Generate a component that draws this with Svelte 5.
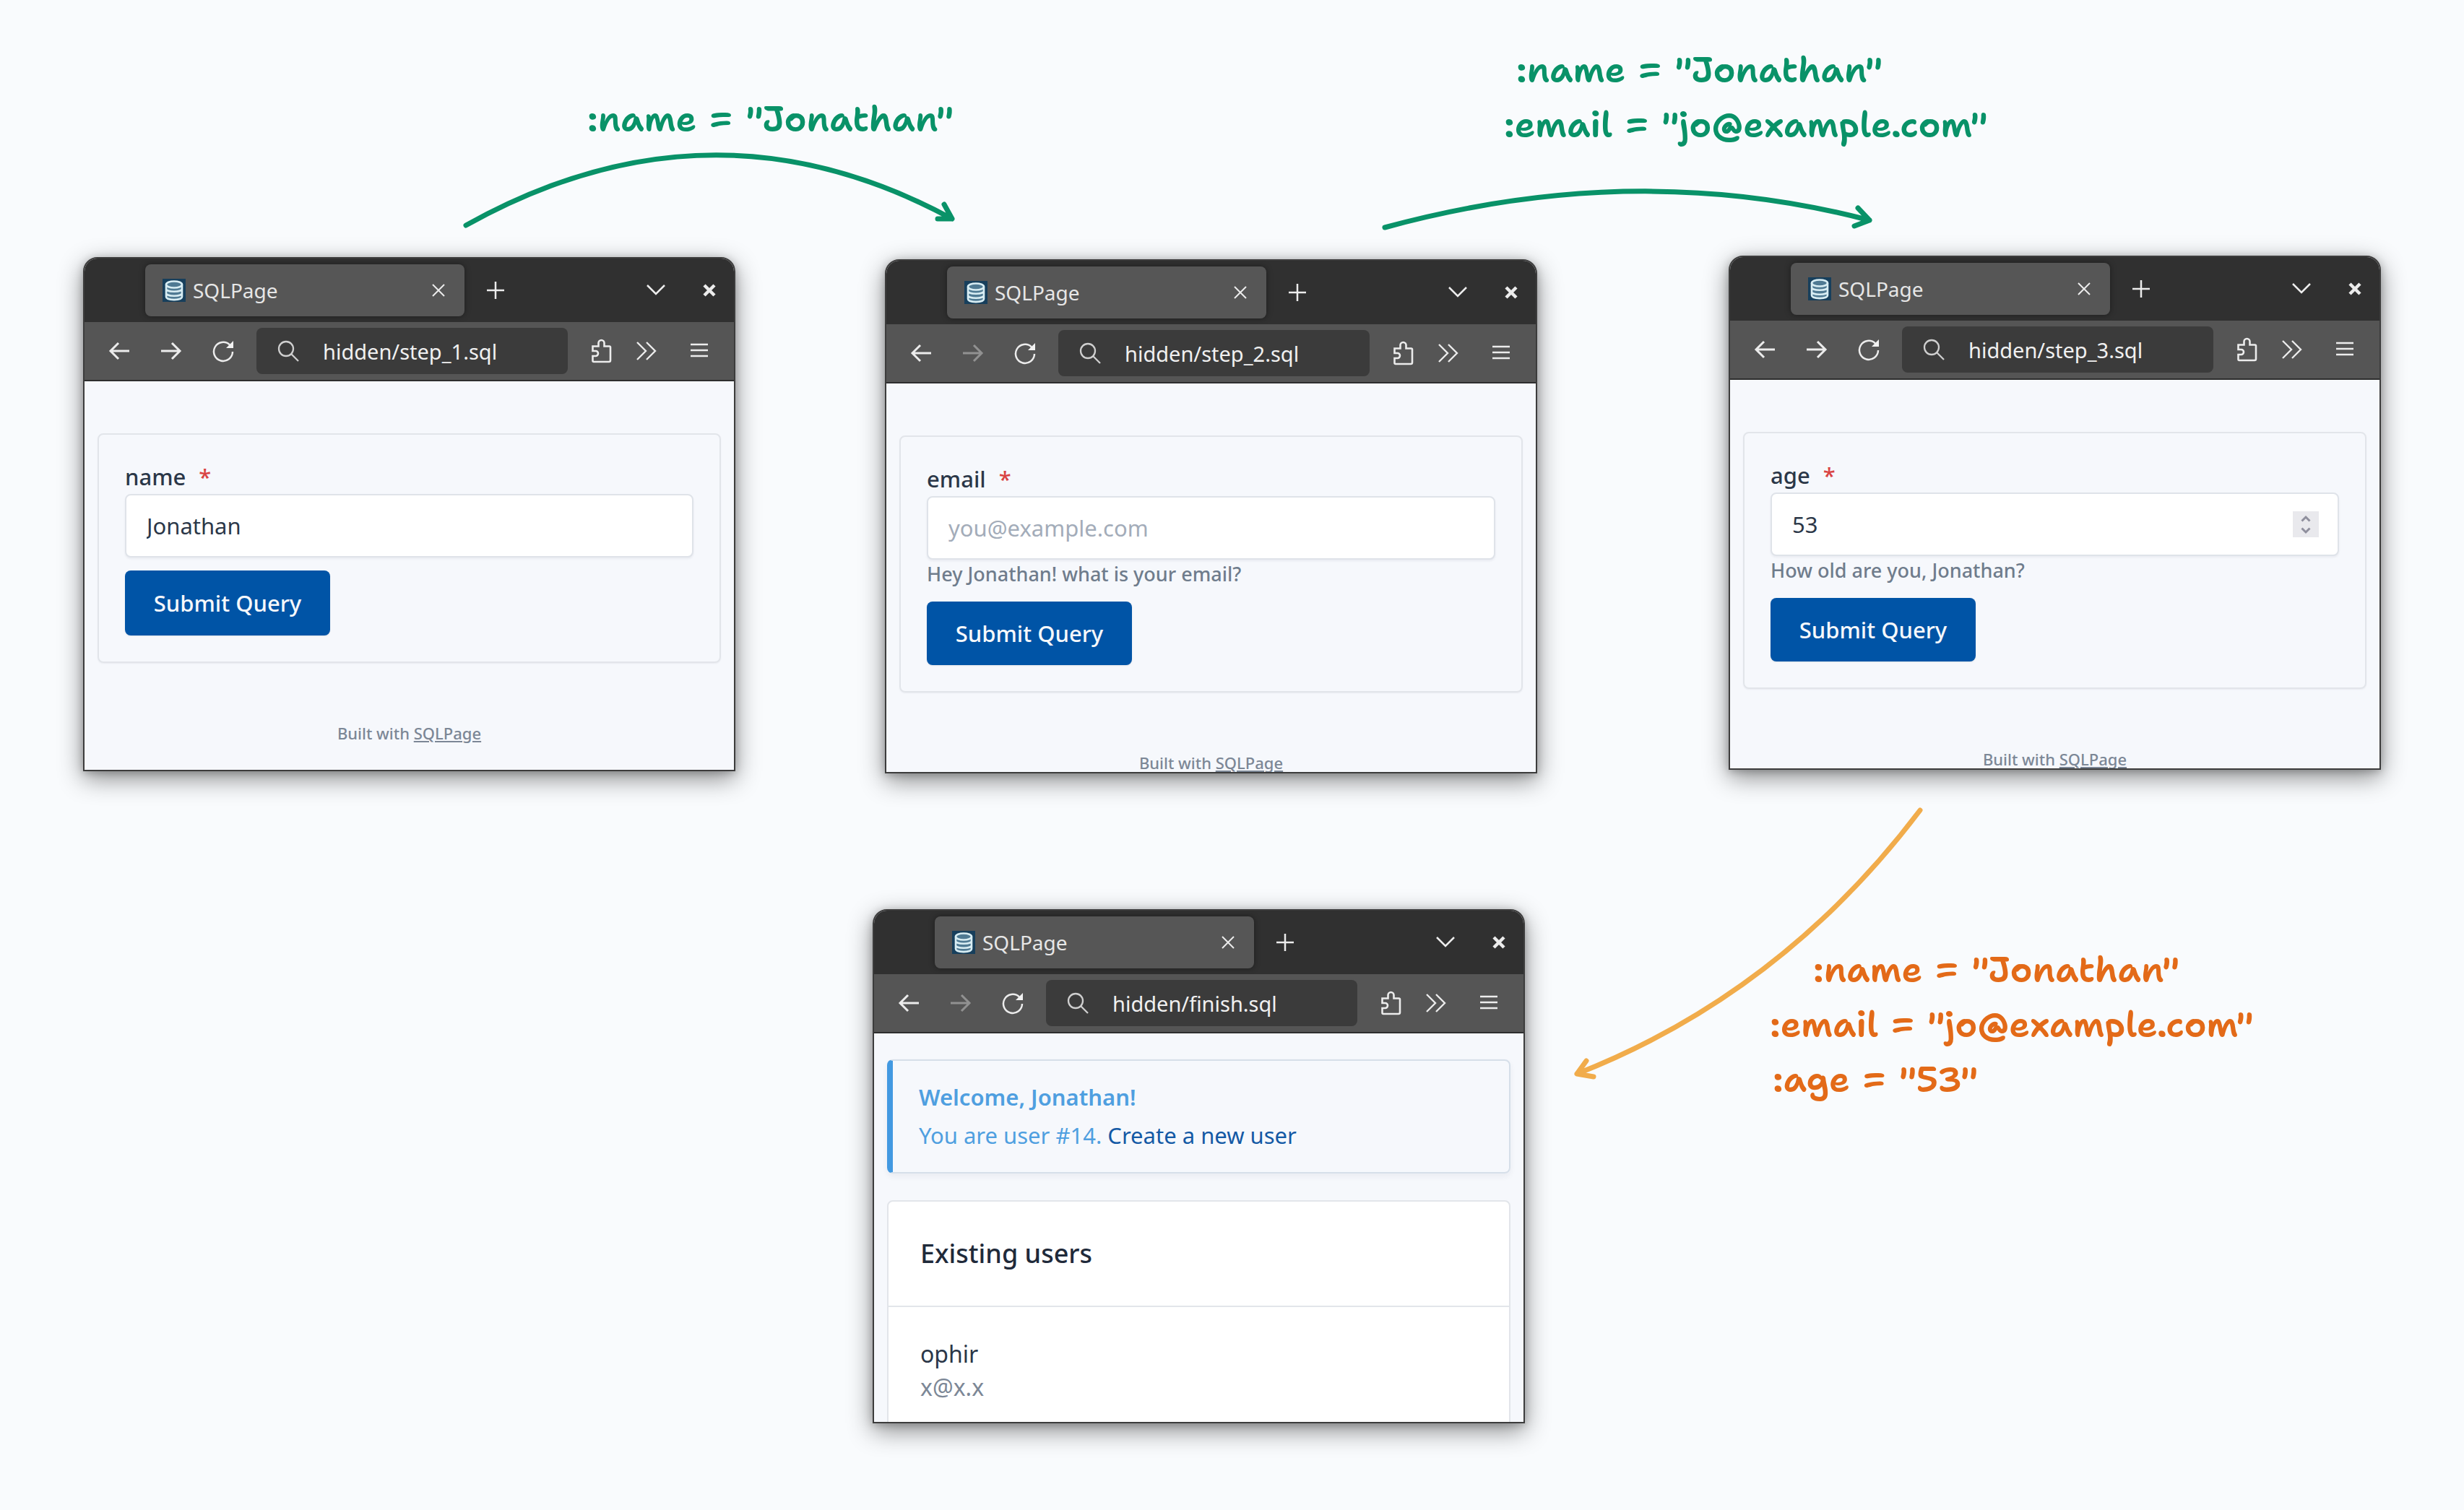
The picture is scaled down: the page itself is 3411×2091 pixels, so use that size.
<script>
  const windows = [
    {
      id: 'step1', url: 'hidden/step_1.sql', forward: true,
      field: { label: 'name', type: 'text', value: 'Jonathan', placeholder: '', hint: '' }
    },
    {
      id: 'step2', url: 'hidden/step_2.sql', forward: false,
      field: { label: 'email', type: 'email', value: '', placeholder: 'you@example.com', hint: 'Hey Jonathan! what is your email?' }
    },
    {
      id: 'step3', url: 'hidden/step_3.sql', forward: true,
      field: { label: 'age', type: 'number', value: '53', placeholder: '', hint: 'How old are you, Jonathan?' }
    },
    { id: 'finish', url: 'hidden/finish.sql', forward: false, field: null }
  ];
</script>

{#snippet formPage(id, field)}
  <form class="card form" onsubmit={(e) => e.preventDefault()}>
    <label for="{id}-field">{field.label}<span class="required">*</span></label>
    <div class="control">
      <input id="{id}-field" type={field.type} value={field.value} placeholder={field.placeholder} />
      {#if field.type === 'number'}
        <span class="spinner" aria-hidden="true">
          <svg viewBox="0 0 36 36"><path d="M12.500 13.500l5.500-5.500 5.500 5.500M12.500 23.500l5.500 5.500 5.500-5.500" /></svg>
        </span>
      {/if}
    </div>
    {#if field.hint}<small>{field.hint}</small>{/if}
    <button class="submit" type="submit">Submit Query</button>
  </form>
  <footer>Built with <a href="#sqlpage">SQLPage</a></footer>
{/snippet}

{#snippet finishPage()}
  <div class="alert" role="status">
    <h4>Welcome, Jonathan!</h4>
    <p>You are user #14. <a href="#new">Create a new user</a></p>
  </div>
  <section class="card users">
    <h3>Existing users</h3>
    <ul>
      <li>
        <div>ophir</div>
        <div class="muted">x@x.x</div>
      </li>
    </ul>
  </section>
{/snippet}

<main class="canvas">
  {#each windows as w (w.id)}
    <article class="window {w.id}">
      <header class="titlebar">
        <div class="tab">
          <svg class="favicon" viewBox="0 0 32 32">
            <rect width="32" height="32" fill="#173f5c" />
            <path d="M5 8v17c0 6 22 6 22 0V8" fill="#4f7a93" />
            <g fill="none" stroke="#d8edf3" stroke-width="2.600">
              <ellipse cx="16" cy="8" rx="11" ry="4.500" fill="#4f7a93" />
              <path d="M5 8v17c0 5.500 22 5.500 22 0V8M5 14c0 5 22 5 22 0M5 20c0 5 22 5 22 0" />
            </g>
          </svg>
          <span class="tab-title">SQLPage</span>
          <button class="icon" aria-label="Close tab">
            <svg viewBox="0 0 32 32"><path d="M8 8l16 16M24 8L8 24" stroke-width="2" /></svg>
          </button>
        </div>
        <button class="icon plus" aria-label="New tab">
          <svg viewBox="0 0 32 32"><path d="M16 4v24M4 16h24" stroke-width="2.500" /></svg>
        </button>
        <button class="icon list" aria-label="List all tabs">
          <svg viewBox="0 0 32 32"><path d="M4 9l12 12L28 9" stroke-width="2.500" /></svg>
        </button>
        <button class="icon" aria-label="Close window">
          <svg viewBox="0 0 32 32"><path d="M9 9l14 14M23 9L9 23" stroke-width="4.500" /></svg>
        </button>
      </header>
      <nav class="toolbar">
        <button class="icon" aria-label="Back">
          <svg viewBox="0 0 32 32"><path d="M30 16H4M15 5L4 16l11 11" stroke-width="3" /></svg>
        </button>
        <button class="icon" aria-label="Forward" disabled={!w.forward}>
          <svg viewBox="0 0 32 32"><path d="M2 16h26M17 5l11 11-11 11" stroke-width="3" /></svg>
        </button>
        <button class="icon" aria-label="Reload">
          <svg viewBox="0 0 32 32">
            <path d="M25 7.500A13 13 0 1 0 29 17" stroke-width="2.500" />
            <path d="M30 2v10H20z" fill="#f2f2f2" stroke="none" />
          </svg>
        </button>
        <div class="address">
          <svg viewBox="0 0 32 32"><circle cx="13" cy="13" r="10" stroke-width="2.300" /><path d="M20 20l10 10" stroke-width="2.300" /></svg>
          <input type="text" aria-label="Address" value={w.url} />
        </div>
        <button class="icon puzzle" aria-label="Extensions">
          <svg viewBox="0 0 32 36">
            <path d="M4.500 11.500h8V7a4 4 0 0 1 8 0v4.500h7a1.500 1.500 0 0 1 1.500 1.500v18a2 2 0 0 1-2 2h-21a1.500 1.500 0 0 1-1.500-1.500V25h4a3.500 3.500 0 0 0 0-7h-4z" stroke-width="2.600" />
          </svg>
        </button>
        <button class="icon more" aria-label="More tools">
          <svg viewBox="0 0 32 32"><path d="M4 4l12 12L4 28M17 4l12 12-12 12" stroke-width="2.400" /></svg>
        </button>
        <button class="icon" aria-label="Menu">
          <svg viewBox="0 0 32 32"><path d="M4 7h24M4 15h24M4 23h24" stroke-width="2.600" /></svg>
        </button>
      </nav>
      <div class="page">
        {#if w.field}
          {@render formPage(w.id, w.field)}
        {:else}
          {@render finishPage()}
        {/if}
      </div>
    </article>
  {/each}

  <svg class="arrows" viewBox="0 0 3411 2091" aria-hidden="true">
    <g class="green-line">
      <path d="M645 312Q985 122 1318 303M1307 283l11 20-20 0" />
      <path d="M1917 315Q2265 220 2588 305M2572 288l16 17-21 8" />
    </g>
    <g class="orange-line">
      <path d="M2658 1122Q2466 1376 2183 1487M2196 1469l-13 18 23 4" />
    </g>
  </svg>

  <p class="note first"><span>:name = "Jonathan"</span></p>
  <p class="note second">
    <span class="indent">:name = "Jonathan"</span>
    <span>:email = "jo@example.com"</span>
  </p>
  <p class="note third">
    <span class="indent">:name = "Jonathan"</span>
    <span>:email = "jo@example.com"</span>
    <span class="age">:age = "53"</span>
  </p>
</main>

<style>
  :global(body) {
    margin: 0;
    background: #f9fbfd;
  }
  * {
    box-sizing: border-box;
  }
  .canvas {
    position: relative;
    min-height: 100vh;
    overflow: hidden;
    font-family: 'Noto Sans', sans-serif;
    font-size: 31px;
    color: #2b3748;
  }
  h3, h4, p, ul {
    margin: 0;
    padding: 0;
    list-style: none;
  }
  button, input {
    font: inherit;
    border: 0;
    padding: 0;
    margin: 0;
    background: none;
    color: inherit;
  }

  /* Browser windows placed on the canvas */
  .window {
    position: absolute;
    display: flex;
    flex-direction: column;
    width: 903px;
    height: 712px;
    border: 2px solid #3c3c3c;
    border-radius: 20px 20px 0 0;
    overflow: hidden;
    background: #f6f8fc;
    box-shadow: 0 10px 34px rgba(0, 0, 0, 0.45), 0 2px 12px rgba(0, 0, 0, 0.22);
  }
  .step1 { left: 115px; top: 356px; }
  .step2 { left: 1225px; top: 359px; }
  .step3 { left: 2393px; top: 354px; }
  .finish { left: 1208px; top: 1259px; }

  .titlebar {
    display: flex;
    flex: none;
    align-items: center;
    height: 88px;
    padding: 0 18px 0 84px;
    background: #303030;
    color: #e6e6e6;
  }
  .tab {
    display: flex;
    align-items: center;
    width: 442px;
    height: 72px;
    padding: 0 20px 0 24px;
    border-radius: 8px;
    background: #565656;
    box-shadow: 0 0 8px rgba(0, 0, 0, 0.4);
    font-size: 28px;
  }
  .tab-title {
    flex: 1;
    padding-left: 10px;
  }
  .favicon {
    width: 32px;
    height: 32px;
  }
  .icon {
    width: 32px;
    height: 32px;
    flex: none;
  }
  .icon svg, .address svg {
    display: block;
    width: 32px;
    height: 32px;
    fill: none;
    stroke: #ececec;
  }
  .icon:disabled {
    opacity: 0.4;
  }
  .plus { margin-left: 27px; }
  .list { margin: 0 42px 0 auto; }

  .toolbar {
    display: flex;
    flex: none;
    align-items: center;
    height: 82px;
    gap: 40px;
    padding: 0 32px;
    border-bottom: 2px solid #2e2e2e;
    background: #555555;
    color: #f0f0f0;
  }
  .address {
    display: flex;
    flex: 1;
    align-items: center;
    gap: 32px;
    min-width: 0;
    height: 64px;
    margin: 0 -10px;
    padding-left: 28px;
    border-radius: 8px;
    background: #3b3b3b;
    font-size: 29px;
  }
  .address svg { stroke: #cfcfcf; flex: none; }
  .address input {
    flex: 1;
    min-width: 0;
  }
  .icon.puzzle, .icon.puzzle svg { height: 36px; }
  .puzzle { margin-right: -10px; }
  .more { margin-right: 2px; }

  .page {
    flex: 1;
    min-height: 0;
    padding: 0 18px;
    overflow: hidden;
  }
  .card {
    border: 2px solid #e2e5ea;
    border-radius: 8px;
  }
  .form {
    display: flex;
    flex-direction: column;
    align-items: flex-start;
    margin-top: 72px;
    padding: 36px;
    box-shadow: 0 1px 2px rgba(30, 40, 60, 0.06);
  }
  label {
    padding-bottom: 2px;
    font-weight: 500;
    line-height: 44px;
  }
  .required {
    margin-left: 18px;
    color: #d94343;
  }
  .control {
    position: relative;
    width: 100%;
  }
  .control input {
    display: block;
    width: 100%;
    height: 88px;
    padding: 0 28px;
    border: 2px solid #dfe3e9;
    border-radius: 8px;
    background: #fff;
    box-shadow: 0 2px 3px rgba(30, 40, 60, 0.06);
    appearance: textfield;
  }
  .control input::placeholder {
    color: #a3acb9;
    opacity: 1;
  }
  .control input::-webkit-inner-spin-button {
    appearance: none;
  }
  .spinner {
    position: absolute;
    top: 26px;
    right: 28px;
    width: 36px;
    height: 36px;
    background: #e9e9ed;
  }
  .spinner svg {
    display: block;
    fill: none;
    stroke: #8f8f9d;
    stroke-width: 3;
  }
  small {
    font-size: 27px;
    font-weight: 500;
    line-height: 40px;
    color: #6f7c8c;
  }
  .submit {
    width: 284px;
    height: 90px;
    margin-top: 18px;
    border-radius: 8px;
    background: #0054a6;
    color: #f6f8fb;
    font-weight: 500;
    box-shadow: 0 1px 2px rgba(30, 40, 60, 0.1);
  }
  small + .submit { height: 88px; }
  footer {
    padding-top: 81px;
    font-size: 22px;
    font-weight: 500;
    line-height: 32px;
    text-align: center;
    color: #7c8796;
  }
  footer a {
    color: inherit;
    text-decoration: underline;
  }

  .alert {
    margin-top: 36px;
    padding: 24px 36px;
    border: 2px solid #d6dfe9;
    border-left: 8px solid #4299e1;
    border-radius: 8px;
    box-shadow: 0 4px 8px rgba(30, 40, 60, 0.06);
    color: #4f9fe0;
    line-height: 53px;
  }
  .alert h4 {
    font-size: 31px;
    font-weight: 600;
  }
  .alert a {
    color: #1359a5;
    text-decoration: none;
  }
  .users {
    margin-top: 37px;
    background: #fff;
  }
  .users h3 {
    padding: 48px 44px;
    border-bottom: 2px solid #e2e5ea;
    font-size: 36px;
    font-weight: 500;
    line-height: 48px;
    color: #1f2a3a;
  }
  .users li {
    padding: 42px 44px;
    font-size: 32px;
    line-height: 46px;
  }
  .muted { color: #7c8796; }

  /* Hand-drawn annotations */
  .arrows {
    position: absolute;
    top: 0;
    left: 0;
    width: 3411px;
    height: 2091px;
    fill: none;
    stroke-width: 7;
    stroke-linecap: round;
    stroke-linejoin: round;
    pointer-events: none;
  }
  .green-line { stroke: #099268; }
  .orange-line { stroke: #f1ac4b; }
  .note {
    position: absolute;
    display: flex;
    flex-direction: column;
    font-family: 'Shantell Sans', 'Comic Neue', 'Noto Sans', sans-serif;
    font-size: 49px;
    font-weight: 600;
    line-height: 76px;
    white-space: nowrap;
    color: #099268;
  }
  .first { left: 813px; top: 127px; }
  .second { left: 2082px; top: 59px; }
  .third { left: 2450px; top: 1305px; color: #e36a18; }
  .second .indent { padding-left: 17px; }
  .third .indent { padding-left: 60px; }
  .age { padding-left: 4px; }
</style>
